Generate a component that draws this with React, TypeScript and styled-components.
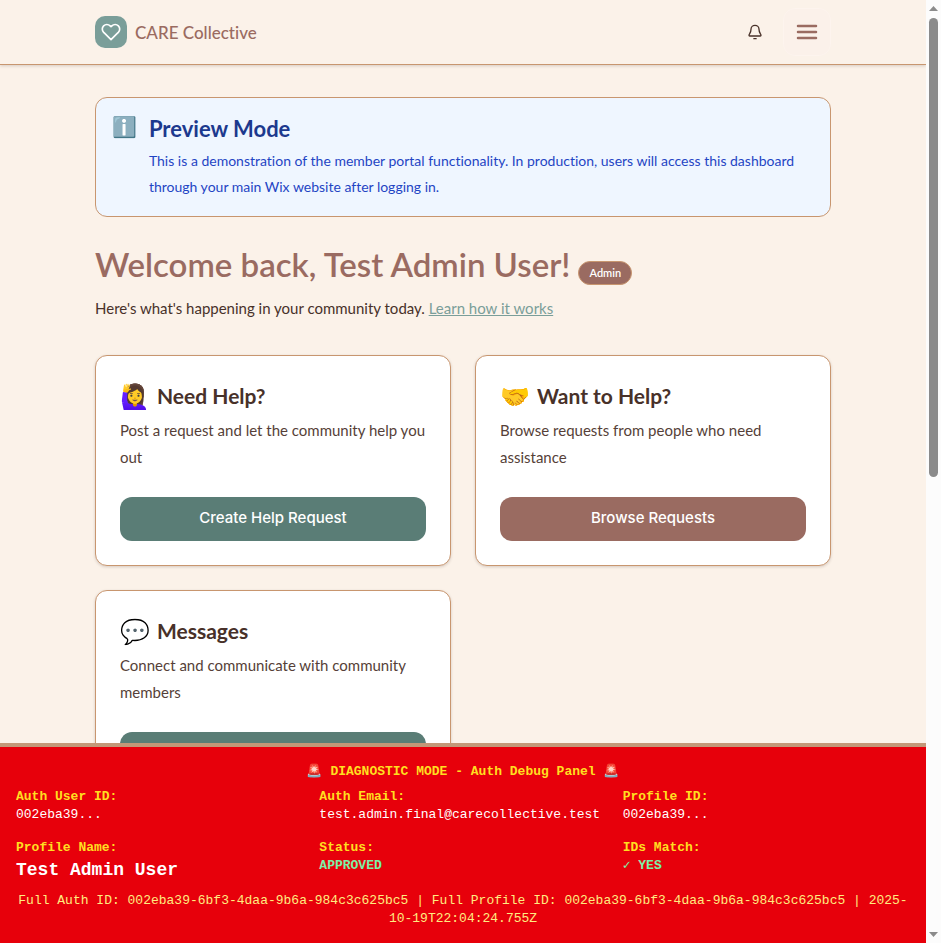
import React from "react";
import styled, { createGlobalStyle } from "styled-components";

const bodyFont = `Lato, "Noto Color Emoji", sans-serif`;
const monoFont = `"Liberation Mono", "DejaVu Sans Mono", "Noto Color Emoji", monospace`;

const color = {
  cream: "#fbf2e9",
  tan: "#c8966f",
  rose: "#9a6b61",
  sage: "#7a9e99",
  teal: "#5a7d76",
  brown: "#483129",
};

const GlobalStyle = createGlobalStyle`
  *, *::before, *::after { box-sizing: border-box; }
  body {
    margin: 0;
    background: ${color.cream};
    color: ${color.brown};
    font-family: ${bodyFont};
    font-variant-ligatures: none;
  }
  h1, h2, h3, p, dl, dd { margin: 0; }
  button { font: inherit; cursor: pointer; }
`;

const Frame = styled.div`
  display: grid;
  grid-template-columns: minmax(0, 1fr) 15px;
  height: 100vh;
  overflow: hidden;
`;

const Page = styled.div`
  display: flex;
  flex-direction: column;
  min-height: 0;
`;

const Viewport = styled.div`
  flex: 1;
  min-height: 0;
  overflow: hidden;
`;

const Header = styled.header`
  border-bottom: 1px solid ${color.tan};
  box-shadow: 0 1px 3px rgba(72, 49, 41, 0.2);
`;

const Container = styled.div`
  max-width: 768px;
  margin: 0 auto;
  padding: 0 16px;
`;

const HeaderRow = styled(Container)`
  display: flex;
  align-items: center;
  justify-content: space-between;
  height: 64px;
`;

const Brand = styled.a`
  display: flex;
  align-items: center;
  gap: 8px;
  color: ${color.rose};
  font-size: 17px;
  font-weight: 500;
  text-decoration: none;
`;

const BrandMark = styled.span`
  display: grid;
  place-items: center;
  width: 32px;
  height: 32px;
  border-radius: 10px;
  background: ${color.sage};
  color: #fff;
`;

const HeaderActions = styled.div`
  display: flex;
  align-items: center;
  gap: 6px;
`;

const IconButton = styled.button<{ $framed?: boolean }>`
  display: grid;
  place-items: center;
  width: ${(p) => (p.$framed ? 48 : 44)}px;
  height: 48px;
  padding: 0;
  border: 1px solid ${(p) => (p.$framed ? "#fdf4ee" : "transparent")};
  border-radius: 12px;
  background: ${(p) => (p.$framed ? "#fbf1ea" : "transparent")};
  color: ${(p) => (p.$framed ? color.rose : color.brown)};
`;

const Main = styled.main`
  padding: 32px 0;
`;

const Notice = styled.section`
  display: flex;
  align-items: flex-start;
  gap: 12px;
  padding: 16px;
  border: 1px solid ${color.tan};
  border-radius: 12px;
  background: #eff6ff;
`;

const NoticeIcon = styled.span`
  width: 25px;
  font-size: 20px;
  line-height: 24px;
`;

const NoticeTitle = styled.h3`
  margin-bottom: 4px;
  color: #1c398e;
  font-size: 22px;
  font-weight: 700;
  line-height: 30px;
`;

const NoticeText = styled.p`
  color: #1f45c4;
  font-size: 14px;
  line-height: 26px;
`;

const Welcome = styled.section`
  padding: 32px 0 33px;
`;

const WelcomeRow = styled.div`
  display: flex;
  align-items: flex-start;
  gap: 8px;
  margin-bottom: 10px;
`;

const WelcomeTitle = styled.h1`
  color: ${color.rose};
  font-size: 33px;
  font-weight: 600;
  line-height: 30px;
`;

const Badge = styled.span`
  margin-top: 12px;
  padding: 0 10px;
  border: 1px solid ${color.tan};
  border-radius: 12px;
  background: ${color.rose};
  color: #fff;
  font-size: 11px;
  font-weight: 600;
  line-height: 22px;
`;

const Lead = styled.p`
  font-size: 15px;
  line-height: 27px;

  a { color: ${color.sage}; }
`;

const Cards = styled.div`
  display: grid;
  grid-template-columns: repeat(2, minmax(0, 1fr));
  gap: 24px;
`;

const Card = styled.article`
  padding: 24px;
  border: 1px solid ${color.tan};
  border-radius: 12px;
  background: #fff;
  box-shadow: 0 1px 3px rgba(72, 49, 41, 0.2);
`;

const CardTitle = styled.h2`
  display: flex;
  align-items: center;
  gap: 8px;
  margin-bottom: 6px;
  font-size: 21px;
  font-weight: 700;
  line-height: 31px;
`;

const CardEmoji = styled.span`
  width: 29px;
  font-size: 24px;
`;

const CardText = styled.p`
  margin-bottom: 26px;
  color: #563f38;
  font-size: 15px;
  line-height: 27px;
`;

const CardButton = styled.button<{ $tone: "teal" | "rose" }>`
  width: 100%;
  height: 44px;
  padding: 0 16px 3px;
  border: 0;
  border-radius: 12px;
  background: ${(p) => color[p.$tone]};
  color: #fff;
  font-family: Inter, sans-serif;
  font-size: 15px;
  font-weight: 500;
`;

const DebugPanel = styled.aside`
  padding: 17px 16px 15px;
  border-top: 4px solid #c39778;
  background: #e7000b;
  color: #fff;
  font-family: ${monoFont};
  font-size: 13px;
  line-height: 18px;
`;

const DebugTitle = styled.h2`
  margin-bottom: 8px;
  color: #ffdf20;
  font-size: 13px;
  font-weight: 700;
  line-height: 16px;
  text-align: center;
`;

const DebugGrid = styled.dl`
  display: grid;
  grid-template-columns: repeat(3, minmax(0, 1fr));
  gap: 15px 16px;
  margin-bottom: 9px;
`;

const DebugLabel = styled.dt`
  color: #ffdf20;
  font-weight: 700;
`;

const DebugValue = styled.dd<{ $kind?: "plain" | "large" | "good" }>`
  color: ${(p) => (p.$kind === "good" ? "#7bf1a8" : "#fff")};
  font-size: ${(p) => (p.$kind === "large" ? 18 : 13)}px;
  font-weight: ${(p) => (p.$kind === "large" || p.$kind === "good" ? 700 : 400)};
  line-height: ${(p) => (p.$kind === "large" ? 26 : 18)}px;
`;

const DebugFooter = styled.p`
  color: #ffec80;
  text-align: center;
`;

const ScrollTrack = styled.div`
  display: flex;
  flex-direction: column;
  align-items: center;
  gap: 7px;
  padding: 6px 0;
  background: #fcfcfc;
`;

const ScrollRail = styled.div`
  flex: 1;
  width: 9px;
`;

const ScrollThumb = styled.div`
  height: 50.6%;
  border-radius: 5px;
  background: #8b8b8b;
`;

const ScrollArrow = styled.svg`
  display: block;
  fill: #8b8b8b;
`;

const HeartIcon = () => (
  <svg width="20" height="20" viewBox="0 0 24 24" fill="none" stroke="currentColor" strokeWidth="2" strokeLinecap="round" strokeLinejoin="round" aria-hidden="true">
    <path d="M20.84 4.61a5.5 5.5 0 0 0-7.78 0L12 5.67l-1.06-1.06a5.5 5.5 0 0 0-7.78 7.78l1.06 1.06L12 21.23l7.78-7.78 1.06-1.06a5.5 5.5 0 0 0 0-7.78z" />
  </svg>
);

const BellIcon = () => (
  <svg width="16" height="16" viewBox="0 0 24 24" fill="none" stroke="currentColor" strokeWidth="2" strokeLinecap="round" strokeLinejoin="round" aria-hidden="true">
    <path d="M12 2a6 6 0 0 0-6 6c0 6-3 7-3 9a1 1 0 0 0 1 1h16a1 1 0 0 0 1-1c0-2-3-3-3-9a6 6 0 0 0-6-6z" />
    <path d="M10.3 22h3.4" />
  </svg>
);

const MenuIcon = () => (
  <svg width="24" height="24" viewBox="0 0 24 24" fill="none" stroke="currentColor" strokeWidth="2.5" strokeLinecap="round" aria-hidden="true">
    <path d="M3 6h18M3 12h18M3 18h18" />
  </svg>
);

type CardData = { emoji: string; title: string; text: string; action?: string; tone: "teal" | "rose" };

const cards: CardData[] = [
  { emoji: "🙋‍♀️", title: "Need Help?", text: "Post a request and let the community help you out", action: "Create Help Request", tone: "teal" },
  { emoji: "🤝", title: "Want to Help?", text: "Browse requests from people who need assistance", action: "Browse Requests", tone: "rose" },
  { emoji: "💬", title: "Messages", text: "Connect and communicate with community members", tone: "teal" },
];

type DebugEntry = { label: string; value: string; kind?: "plain" | "large" | "good" };

const debugEntries: DebugEntry[] = [
  { label: "Auth User ID:", value: "002eba39..." },
  { label: "Auth Email:", value: "test.admin.final@carecollective.test" },
  { label: "Profile ID:", value: "002eba39..." },
  { label: "Profile Name:", value: "Test Admin User", kind: "large" },
  { label: "Status:", value: "APPROVED", kind: "good" },
  { label: "IDs Match:", value: "✓ YES", kind: "good" },
];

export default function App() {
  return (
    <Frame>
      <GlobalStyle />
      <Page>
        <Viewport>
          <Header>
            <HeaderRow>
              <Brand href="#">
                <BrandMark><HeartIcon /></BrandMark>
                CARE Collective
              </Brand>
              <HeaderActions>
                <IconButton type="button" aria-label="Notifications"><BellIcon /></IconButton>
                <IconButton type="button" aria-label="Open menu" $framed><MenuIcon /></IconButton>
              </HeaderActions>
            </HeaderRow>
          </Header>
          <Main>
            <Container>
              <Notice>
                <NoticeIcon>ℹ️</NoticeIcon>
                <div>
                  <NoticeTitle>Preview Mode</NoticeTitle>
                  <NoticeText>
                    This is a demonstration of the member portal functionality. In production, users will access this dashboard through your main Wix website after logging in.
                  </NoticeText>
                </div>
              </Notice>
              <Welcome>
                <WelcomeRow>
                  <WelcomeTitle>Welcome back, Test Admin User!</WelcomeTitle>
                  <Badge>Admin</Badge>
                </WelcomeRow>
                <Lead>
                  Here's what's happening in your community today. <a href="#">Learn how it works</a>
                </Lead>
              </Welcome>
              <Cards>
                {cards.map((card) => (
                  <Card key={card.title}>
                    <CardTitle>
                      <CardEmoji>{card.emoji}</CardEmoji>
                      {card.title}
                    </CardTitle>
                    <CardText>{card.text}</CardText>
                    <CardButton type="button" $tone={card.tone} aria-label={card.action ?? card.title}>
                      {card.action}
                    </CardButton>
                  </Card>
                ))}
              </Cards>
            </Container>
          </Main>
        </Viewport>
        <DebugPanel>
          <DebugTitle>🚨 DIAGNOSTIC MODE - Auth Debug Panel 🚨</DebugTitle>
          <DebugGrid>
            {debugEntries.map((entry) => (
              <div key={entry.label}>
                <DebugLabel>{entry.label}</DebugLabel>
                <DebugValue $kind={entry.kind}>{entry.value}</DebugValue>
              </div>
            ))}
          </DebugGrid>
          <DebugFooter>
            Full Auth ID: 002eba39-6bf3-4daa-9b6a-984c3c625bc5 | Full Profile ID: 002eba39-6bf3-4daa-9b6a-984c3c625bc5 | 2025-10-19T22:04:24.755Z
          </DebugFooter>
        </DebugPanel>
      </Page>
      <ScrollTrack aria-hidden="true">
        <ScrollArrow width="9" height="5" viewBox="0 0 9 5"><path d="M0 5 4.500 0 9 5z" /></ScrollArrow>
        <ScrollRail><ScrollThumb /></ScrollRail>
        <ScrollArrow width="9" height="5" viewBox="0 0 9 5"><path d="M0 0 4.500 5 9 0z" /></ScrollArrow>
      </ScrollTrack>
    </Frame>
  );
}
